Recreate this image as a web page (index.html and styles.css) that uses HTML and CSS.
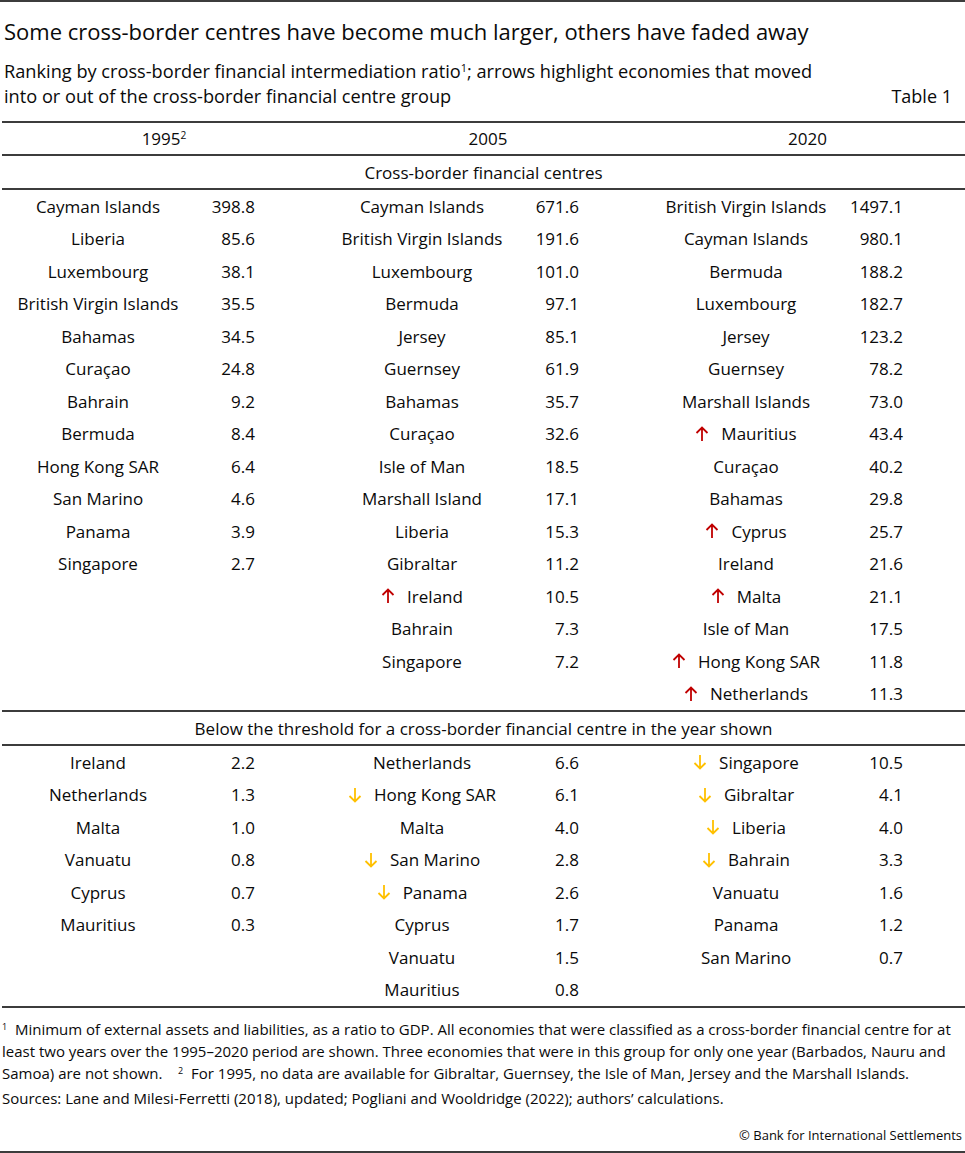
FILE: index.html
```html
<!DOCTYPE html>
<html lang="en">
<head>
<meta charset="utf-8">
<title>Table 1</title>
<link rel="stylesheet" href="styles.css">
</head>
<body>
<div class="page">
  <h1 class="title">Some cross-border centres have become much larger, others have faded away</h1>
  <div class="subtitle">
    <p class="sub-text">Ranking by cross-border financial intermediation ratio<sup>1</sup>; arrows highlight economies that moved into or out of the cross-border financial centre group</p>
    <span class="table-no">Table 1</span>
  </div>

  <div class="tbl">
    <div class="years">
      <div class="year">1995<sup>2</sup></div>
      <div class="year">2005</div>
      <div class="year">2020</div>
    </div>
    <div class="section-head">Cross-border financial centres</div>
    <div class="section">
      <div class="group">
        <div class="name">Cayman Islands</div><div class="val">398.8</div>
        <div class="name">Liberia</div><div class="val">85.6</div>
        <div class="name">Luxembourg</div><div class="val">38.1</div>
        <div class="name">British Virgin Islands</div><div class="val">35.5</div>
        <div class="name">Bahamas</div><div class="val">34.5</div>
        <div class="name">Curaçao</div><div class="val">24.8</div>
        <div class="name">Bahrain</div><div class="val">9.2</div>
        <div class="name">Bermuda</div><div class="val">8.4</div>
        <div class="name">Hong Kong SAR</div><div class="val">6.4</div>
        <div class="name">San Marino</div><div class="val">4.6</div>
        <div class="name">Panama</div><div class="val">3.9</div>
        <div class="name">Singapore</div><div class="val">2.7</div>
      </div>
      <div class="group">
        <div class="name">Cayman Islands</div><div class="val">671.6</div>
        <div class="name">British Virgin Islands</div><div class="val">191.6</div>
        <div class="name">Luxembourg</div><div class="val">101.0</div>
        <div class="name">Bermuda</div><div class="val">97.1</div>
        <div class="name">Jersey</div><div class="val">85.1</div>
        <div class="name">Guernsey</div><div class="val">61.9</div>
        <div class="name">Bahamas</div><div class="val">35.7</div>
        <div class="name">Curaçao</div><div class="val">32.6</div>
        <div class="name">Isle of Man</div><div class="val">18.5</div>
        <div class="name">Marshall Island</div><div class="val">17.1</div>
        <div class="name">Liberia</div><div class="val">15.3</div>
        <div class="name">Gibraltar</div><div class="val">11.2</div>
        <div class="name"><svg class="arrow up" viewBox="0 0 14 16"><path d="M7 15V1.5M1.5 7L7 1.5L12.5 7"/></svg>Ireland</div><div class="val">10.5</div>
        <div class="name">Bahrain</div><div class="val">7.3</div>
        <div class="name">Singapore</div><div class="val">7.2</div>
      </div>
      <div class="group">
        <div class="name">British Virgin Islands</div><div class="val">1497.1</div>
        <div class="name">Cayman Islands</div><div class="val">980.1</div>
        <div class="name">Bermuda</div><div class="val">188.2</div>
        <div class="name">Luxembourg</div><div class="val">182.7</div>
        <div class="name">Jersey</div><div class="val">123.2</div>
        <div class="name">Guernsey</div><div class="val">78.2</div>
        <div class="name">Marshall Islands</div><div class="val">73.0</div>
        <div class="name"><svg class="arrow up" viewBox="0 0 14 16"><path d="M7 15V1.5M1.5 7L7 1.5L12.5 7"/></svg>Mauritius</div><div class="val">43.4</div>
        <div class="name">Curaçao</div><div class="val">40.2</div>
        <div class="name">Bahamas</div><div class="val">29.8</div>
        <div class="name"><svg class="arrow up" viewBox="0 0 14 16"><path d="M7 15V1.5M1.5 7L7 1.5L12.5 7"/></svg>Cyprus</div><div class="val">25.7</div>
        <div class="name">Ireland</div><div class="val">21.6</div>
        <div class="name"><svg class="arrow up" viewBox="0 0 14 16"><path d="M7 15V1.5M1.5 7L7 1.5L12.5 7"/></svg>Malta</div><div class="val">21.1</div>
        <div class="name">Isle of Man</div><div class="val">17.5</div>
        <div class="name"><svg class="arrow up" viewBox="0 0 14 16"><path d="M7 15V1.5M1.5 7L7 1.5L12.5 7"/></svg>Hong Kong SAR</div><div class="val">11.8</div>
        <div class="name"><svg class="arrow up" viewBox="0 0 14 16"><path d="M7 15V1.5M1.5 7L7 1.5L12.5 7"/></svg>Netherlands</div><div class="val">11.3</div>
      </div>
    </div>
    <div class="section-head">Below the threshold for a cross-border financial centre in the year shown</div>
    <div class="section below">
      <div class="group">
        <div class="name">Ireland</div><div class="val">2.2</div>
        <div class="name">Netherlands</div><div class="val">1.3</div>
        <div class="name">Malta</div><div class="val">1.0</div>
        <div class="name">Vanuatu</div><div class="val">0.8</div>
        <div class="name">Cyprus</div><div class="val">0.7</div>
        <div class="name">Mauritius</div><div class="val">0.3</div>
      </div>
      <div class="group">
        <div class="name">Netherlands</div><div class="val">6.6</div>
        <div class="name"><svg class="arrow down" viewBox="0 0 14 16"><path d="M7 1V14.5M1.5 9L7 14.5L12.5 9"/></svg>Hong Kong SAR</div><div class="val">6.1</div>
        <div class="name">Malta</div><div class="val">4.0</div>
        <div class="name"><svg class="arrow down" viewBox="0 0 14 16"><path d="M7 1V14.5M1.5 9L7 14.5L12.5 9"/></svg>San Marino</div><div class="val">2.8</div>
        <div class="name"><svg class="arrow down" viewBox="0 0 14 16"><path d="M7 1V14.5M1.5 9L7 14.5L12.5 9"/></svg>Panama</div><div class="val">2.6</div>
        <div class="name">Cyprus</div><div class="val">1.7</div>
        <div class="name">Vanuatu</div><div class="val">1.5</div>
        <div class="name">Mauritius</div><div class="val">0.8</div>
      </div>
      <div class="group">
        <div class="name"><svg class="arrow down" viewBox="0 0 14 16"><path d="M7 1V14.5M1.5 9L7 14.5L12.5 9"/></svg>Singapore</div><div class="val">10.5</div>
        <div class="name"><svg class="arrow down" viewBox="0 0 14 16"><path d="M7 1V14.5M1.5 9L7 14.5L12.5 9"/></svg>Gibraltar</div><div class="val">4.1</div>
        <div class="name"><svg class="arrow down" viewBox="0 0 14 16"><path d="M7 1V14.5M1.5 9L7 14.5L12.5 9"/></svg>Liberia</div><div class="val">4.0</div>
        <div class="name"><svg class="arrow down" viewBox="0 0 14 16"><path d="M7 1V14.5M1.5 9L7 14.5L12.5 9"/></svg>Bahrain</div><div class="val">3.3</div>
        <div class="name">Vanuatu</div><div class="val">1.6</div>
        <div class="name">Panama</div><div class="val">1.2</div>
        <div class="name">San Marino</div><div class="val">0.7</div>
      </div>
    </div>
  </div>

  <div class="notes">
    <p class="footnote"><sup>1</sup>&nbsp; Minimum of external assets and liabilities, as a ratio to GDP. All economies that were classified as a cross-border financial centre for at least two years over the 1995–2020 period are shown. Three economies that were in this group for only one year (Barbados, Nauru and Samoa) are not shown. &nbsp;&nbsp; <sup>2</sup>&nbsp; For 1995, no data are available for Gibraltar, Guernsey, the Isle of Man, Jersey and the Marshall Islands.</p>
    <p class="sources">Sources: Lane and Milesi-Ferretti (2018), updated; Pogliani and Wooldridge (2022); authors’ calculations.</p>
    <p class="copyright">© Bank for International Settlements</p>
  </div>
</div>
</body>
</html>
```

FILE: styles.css
```css
html, body {
  margin: 0;
  padding: 0;
  background: #fff;
}

.page {
  width: 965px;
  height: 1153px;
  box-sizing: border-box;
  border-top: 2px solid #3c3c3c;
  border-bottom: 2px solid #3c3c3c;
  font-family: "Open Sans", "Noto Sans", "DejaVu Sans", sans-serif;
  color: #0a0a0a;
  display: flex;
  flex-direction: column;
}

.title {
  margin: 14px 0 0 4px;
  font-size: 22px;
  font-weight: 400;
  line-height: 30px;
}

.subtitle {
  display: flex;
  align-items: flex-end;
  justify-content: space-between;
  margin: 13px 13px 0 4px;
  line-height: 25px;
}

.sub-text {
  margin: 0;
  width: 822px;
  font-size: 18.2px;
}

.table-no {
  font-size: 18px;
}

sup {
  font-size: 0.6em;
  line-height: 0;
  vertical-align: 0.55em;
}

.tbl {
  margin: 12px 0 0 2px;
  border-top: 2px solid #3c3c3c;
  font-size: 17px;
}

.years {
  display: grid;
  grid-template-columns: 324px 324px 1fr;
  height: 31px;
  align-items: center;
  border-bottom: 2px solid #3c3c3c;
}

.year {
  text-align: center;
}

.section-head {
  height: 32px;
  line-height: 33px;
  text-align: center;
  border-bottom: 2px solid #3c3c3c;
}

.section {
  display: grid;
  grid-template-columns: 324px 324px 1fr;
  align-items: start;
  height: 520px;
  border-bottom: 2px solid #3c3c3c;
}

.section.below {
  height: 260px;
}

.group {
  display: grid;
  grid-template-columns: 192px 61px;
  grid-auto-rows: 32.5px;
  align-items: center;
}

.name {
  display: flex;
  justify-content: center;
  align-items: center;
  white-space: nowrap;
}

.val {
  text-align: right;
  white-space: nowrap;
}

.arrow {
  width: 14px;
  height: 16px;
  margin-right: 12px;
  fill: none;
  stroke-width: 1.8;
  stroke-linecap: butt;
  stroke-linejoin: miter;
}

.arrow.up {
  stroke: #c00000;
}

.arrow.down {
  stroke: #ffc000;
}

.notes {
  padding: 10px 0 0 2px;
}

.footnote {
  margin: 0;
  font-size: 15px;
  line-height: 22px;
}

.sources {
  margin: 3px 0 0;
  font-size: 15px;
  line-height: 22px;
}

.copyright {
  margin: 17px 3px 0 0;
  text-align: right;
  font-size: 13px;
  line-height: 18px;
}
```
